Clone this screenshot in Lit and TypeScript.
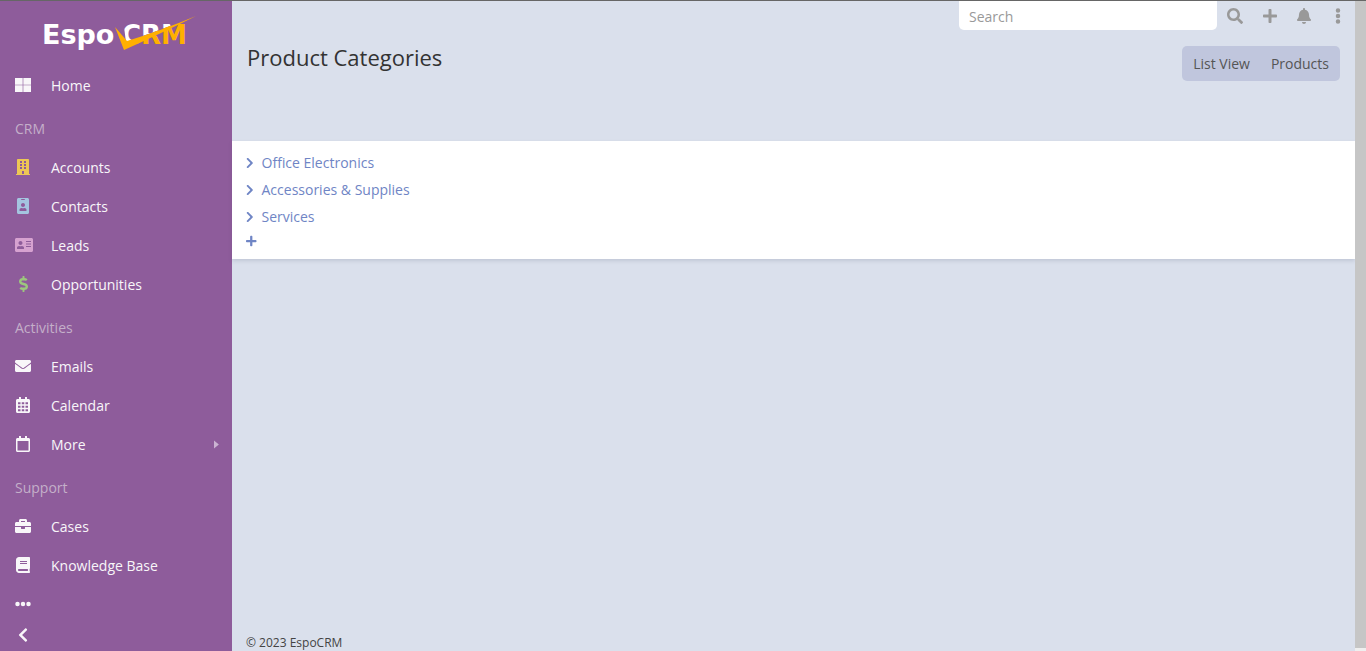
import { LitElement, html, svg, css, nothing } from "lit";
import { customElement, property } from "lit/decorators.js";

type Glyph = { width: number; path: string };

const box = (x: number, y: number, w: number, h: number) => `M${x} ${y}v${h}h${w}v${-h}z`;

const grid = (xs: number[], ys: number[], w: number, h: number) =>
  ys.map((y) => xs.map((x) => box(x, y, w, h)).join("")).join("");

const calendarFrame =
  "M400 64h-48V12c0-6.6-5.4-12-12-12h-40c-6.6 0-12 5.4-12 12v52H160V12c0-6.6-5.4-12-12-12h-40c-6.6 0-12 5.4-12 12v52H48C21.5 64 0 85.5 0 112v352c0 26.5 21.5 48 48 48h352c26.5 0 48-21.5 48-48V112c0-26.5-21.5-48-48-48z";

const dot = (cx: number, cy: number) => `M${cx - 72} ${cy}a72 72 0 1 0 144 0a72 72 0 1 0 -144 0z`;

const GLYPHS: Record<string, Glyph> = {
  home: { width: 512, path: grid([0, 266], [32, 266], 246, 214) },
  building: {
    width: 448,
    path:
      "M436 480h-20V24c0-13.3-10.7-24-24-24H56C42.7 0 32 10.7 32 24v456H12c-6.6 0-12 5.4-12 12v20h448v-20c0-6.6-5.4-12-12-12z" +
      grid([128, 256], [64, 160, 256], 64, 64) +
      box(192, 384, 64, 96),
  },
  badge: {
    width: 384,
    path: "M336 0H48C21.5 0 0 21.5 0 48v416c0 26.5 21.5 48 48 48h288c26.5 0 48-21.5 48-48V48c0-26.5-21.5-48-48-48zM144 32h96c8.8 0 16 7.2 16 16s-7.2 16-16 16h-96c-8.8 0-16-7.2-16-16s7.2-16 16-16zm48 128c35.3 0 64 28.7 64 64s-28.7 64-64 64-64-28.7-64-64 28.7-64 64-64zm112 236.8c0 10.6-10 19.2-22.4 19.2H102.4C90 416 80 407.4 80 396.8v-19.2c0-31.8 30.1-57.6 67.2-57.6h5c12.3 5.1 25.7 8 39.8 8s27.6-2.9 39.8-8h5c37.1 0 67.2 25.8 67.2 57.6v19.2z",
  },
  card: {
    width: 576,
    path:
      "M528 32H48C21.5 32 0 53.5 0 80v352c0 26.5 21.5 48 48 48h480c26.5 0 48-21.5 48-48V80c0-26.5-21.5-48-48-48zm-352 96c35.3 0 64 28.7 64 64s-28.7 64-64 64-64-28.7-64-64 28.7-64 64-64zm112 236.8c0 10.6-10 19.2-22.4 19.2H86.4C74 384 64 375.4 64 364.8v-19.2c0-31.8 30.1-57.6 67.2-57.6h5c12.3 5.1 25.7 8 39.8 8s27.6-2.9 39.8-8h5c37.1 0 67.2 25.8 67.2 57.6v19.2z" +
      grid([352], [128, 208, 288], 160, 32),
  },
  dollar: {
    width: 288,
    path: "M209.2 233.4l-108-31.6C88.7 198.2 80 186.5 80 173.5c0-16.3 13.2-29.5 29.5-29.5h66.3c12.2 0 24.2 3.7 34.2 10.5 6.1 4.1 14.3 3.1 19.5-2l34.8-34c7.1-6.9 6.1-18.4-1.8-24.5C238 74.8 207.4 64.1 176 64V16c0-8.8-7.2-16-16-16h-32c-8.8 0-16 7.2-16 16v48h-2.5C45.8 64-5.4 118.7.5 183.6c4.2 46.1 39.4 83.6 83.8 96.6l102.5 30c12.5 3.7 21.2 15.3 21.2 28.3 0 16.3-13.2 29.5-29.5 29.5h-66.3C100 368 88 364.3 78 357.5c-6.1-4.1-14.3-3.1-19.5 2l-34.8 34c-7.1 6.9-6.1 18.4 1.8 24.5 24.5 19.2 55.1 29.9 86.5 30v48c0 8.8 7.2 16 16 16h32c8.8 0 16-7.2 16-16v-48.2c46.6-.9 90.3-28.6 105.7-72.7 21.5-61.6-14.6-124.8-72.5-141.7z",
  },
  envelope: {
    width: 512,
    path: "M502.3 190.8c3.9-3.1 9.7-.2 9.7 4.7V400c0 26.5-21.5 48-48 48H48c-26.5 0-48-21.5-48-48V195.6c0-5 5.7-7.8 9.7-4.7 22.4 17.4 52.1 39.5 154.1 113.6 21.1 15.4 56.7 47.8 92.2 47.6 35.7.3 72-32.8 92.3-47.6 102-74.1 131.6-96.3 154-113.7zM256 320c23.2.4 56.6-29.2 73.4-41.4 132.7-96.3 142.8-104.7 173.4-128.7 5.8-4.5 9.2-11.5 9.2-18.9v-19c0-26.5-21.5-48-48-48H48c-26.5 0-48 21.5-48 48v19c0 7.4 3.4 14.3 9.2 18.9 30.6 23.9 40.7 32.4 173.4 128.7 16.8 12.2 50.2 41.8 73.4 41.4z",
  },
  calendar: { width: 448, path: calendarFrame + grid([64, 184, 304], [168, 280, 392], 80, 64) },
  calendarEmpty: { width: 448, path: calendarFrame + "M394 464H54c-3.3 0-6-2.7-6-6V160h352v298c0 3.3-2.7 6-6 6z" },
  briefcase: {
    width: 512,
    path: "M320 336c0 8.8-7.2 16-16 16h-96c-8.8 0-16-7.2-16-16v-48H0v144c0 25.6 22.4 48 48 48h416c25.6 0 48-22.4 48-48V288H320v48zm144-208h-80V80c0-25.6-22.4-48-48-48H176c-25.6 0-48 22.4-48 48v48H48c-25.6 0-48 22.4-48 48v80h512v-80c0-25.6-22.4-48-48-48zm-144 0H192V96h128v32z",
  },
  book: {
    width: 448,
    path:
      "M448 360V24c0-13.3-10.7-24-24-24H96C43 0 0 43 0 96v320c0 53 43 96 96 96h328c13.3 0 24-10.7 24-24v-16c0-7.5-3.5-14.3-8.9-18.7-4.2-15.4-4.2-59.3 0-74.7 5.4-4.3 8.9-11.1 8.9-18.6zM381.4 448H96c-17.7 0-32-14.3-32-32 0-17.6 14.4-32 32-32h285.4c-1.9 17.1-1.9 46.9 0 64z" +
      grid([128], [128, 192], 224, 32),
  },
  dots: { width: 512, path: dot(80, 256) + dot(256, 256) + dot(432, 256) },
  dotsVertical: { width: 192, path: dot(96, 80) + dot(96, 256) + dot(96, 432) },
  chevronLeft: {
    width: 320,
    path: "M34.5 239L228.9 44.7c9.4-9.4 24.6-9.4 33.9 0l22.7 22.7c9.4 9.4 9.4 24.5 0 33.9L131.5 256l154 154.7c9.4 9.4 9.4 24.6 0 33.9l-22.7 22.7c-9.4 9.4-24.6 9.4-33.9 0L34.5 273c-9.4-9.4-9.4-24.6 0-34z",
  },
  chevronRight: {
    width: 320,
    path: "M285.5 273L91.1 467.3c-9.4 9.4-24.6 9.4-33.9 0l-22.7-22.7c-9.4-9.4-9.4-24.5 0-33.9L188.5 256 34.5 101.3c-9.4-9.4-9.4-24.6 0-33.9l22.7-22.7c9.4-9.4 24.6-9.4 33.9 0L285.5 239c9.4 9.4 9.4 24.6 0 34z",
  },
  search: {
    width: 512,
    path: "M505 442.7L405.3 343c-4.5-4.5-10.6-7-17-7H372c27.6-35.3 44-79.7 44-128C416 93.1 322.9 0 208 0S0 93.1 0 208s93.1 208 208 208c48.3 0 92.7-16.4 128-44v16.3c0 6.4 2.5 12.5 7 17l99.7 99.7c9.4 9.4 24.6 9.4 33.9 0l28.3-28.3c9.4-9.4 9.4-24.6.1-34zM208 336c-70.7 0-128-57.2-128-128 0-70.7 57.2-128 128-128 70.7 0 128 57.2 128 128 0 70.7-57.2 128-128 128z",
  },
  plus: {
    width: 448,
    path: "M416 208H272V64c0-17.7-14.3-32-32-32h-32c-17.7 0-32 14.3-32 32v144H32c-17.7 0-32 14.3-32 32v32c0 17.7 14.3 32 32 32h144v144c0 17.7 14.3 32 32 32h32c17.7 0 32-14.3 32-32V304h144c17.7 0 32-14.3 32-32v-32c0-17.7-14.3-32-32-32z",
  },
  bell: {
    width: 448,
    path: "M224 512c35.3 0 64-28.7 64-64H160c0 35.3 28.7 64 64 64zm215.4-149.7c-19.3-20.8-55.5-52-55.5-154.3 0-77.7-54.5-139.9-127.9-155.2V32c0-17.7-14.3-32-32-32s-32 14.3-32 32v20.8C118.6 68.1 64.1 130.3 64.1 208c0 102.3-36.2 133.5-55.5 154.3-6 6.4-8.7 14.2-8.6 21.7.1 16.4 13 32 32.1 32h383.8c19.1 0 32-15.6 32.1-32 0-7.5-2.6-15.3-8.5-21.7z",
  },
  caret: { width: 192, path: "M0 96L192 256L0 416z" },
};

@customElement("crm-icon")
export class CrmIcon extends LitElement {
  @property() name = "";
  @property({ type: Number }) size = 16;

  static styles = css`
    :host { display: inline-flex; flex: none; }
    svg { display: block; fill: currentColor; fill-rule: evenodd; }
  `;

  render() {
    const glyph = GLYPHS[this.name];
    if (!glyph) return nothing;
    return html`<svg
      width=${(glyph.width / 512) * this.size}
      height=${this.size}
      viewBox="0 0 ${glyph.width} 512"
      aria-hidden="true"
    >${svg`<path d=${glyph.path}></path>`}</svg>`;
  }
}

@customElement("crm-logo")
export class CrmLogo extends LitElement {
  static styles = css`
    :host { display: block; }
    svg { display: block; }
    .word { font-family: "DejaVu Sans", Verdana, sans-serif; font-weight: 700; }
    .first { font-size: 27px; }
    .second { font-size: 26px; }
    .light { fill: #fff; }
    .gold { fill: #ffb000; }
  `;

  render() {
    return html`<svg width="156" height="40" viewBox="0 0 156 40" role="img" aria-label="EspoCRM">
      <defs>
        <clipPath id="above"><path d="M80 0H156V4L84 30Z"></path></clipPath>
        <clipPath id="below"><path d="M84 31L156 3V40H84Z"></path></clipPath>
      </defs>
      <text class="word first light" x="0" y="32">Espo</text>
      <text class="word second light" x="80" y="32" clip-path="url(#above)">CRM</text>
      <text class="word second gold" x="80" y="32" clip-path="url(#below)">CRM</text>
      <path class="gold" d="M73 15L85 29Q118 19 154 4Q120 21 82 38Z"></path>
    </svg>`;
  }
}

type NavEntry = { label: string; icon?: string; tone?: string; more?: boolean };

const NAV: NavEntry[] = [
  { label: "Home", icon: "home" },
  { label: "CRM" },
  { label: "Accounts", icon: "building", tone: "yellow" },
  { label: "Contacts", icon: "badge", tone: "blue" },
  { label: "Leads", icon: "card", tone: "pink" },
  { label: "Opportunities", icon: "dollar", tone: "green" },
  { label: "Activities" },
  { label: "Emails", icon: "envelope" },
  { label: "Calendar", icon: "calendar" },
  { label: "More", icon: "calendarEmpty", more: true },
  { label: "Support" },
  { label: "Cases", icon: "briefcase" },
  { label: "Knowledge Base", icon: "book" },
];

const CATEGORIES = ["Office Electronics", "Accessories & Supplies", "Services"];

@customElement("app-root")
export class AppRoot extends LitElement {
  static styles = css`
    :host {
      display: flex;
      box-sizing: border-box;
      height: 100vh;
      overflow: hidden;
      border-top: 1px solid #666;
      background: #dae0ec;
      color: #333;
      font: 14px/20px "Open Sans", sans-serif;
    }
    *, *::before { box-sizing: border-box; }
    a { color: inherit; text-decoration: none; }
    button {
      display: flex;
      align-items: center;
      padding: 0;
      border: 0;
      background: none;
      color: inherit;
      font: inherit;
      cursor: pointer;
    }
    ul { margin: 0; padding: 0; list-style: none; }

    .sidebar {
      display: flex;
      flex-direction: column;
      flex: none;
      width: 232px;
      background: #8e5c9b;
      color: #f8f6f9;
    }
    .brand { display: block; padding: 11px 0 14px 42px; }
    .item { display: flex; align-items: center; height: 39px; padding: 0 13px 0 15px; }
    .slot {
      display: flex;
      justify-content: safe center;
      width: 16px;
      margin-right: 20px;
      padding-bottom: 2px;
    }
    .yellow { color: #edc755; }
    .blue { color: #a4c5e0; }
    .pink { color: #d6a2d0; }
    .green { color: #9cc77d; }
    .caret { display: flex; margin-left: auto; padding-bottom: 1px; color: #cbb3d2; }
    .divider { height: 43px; padding: 14px 15px 0; color: #c4afc9; }
    .tool { width: 100%; height: 38px; padding: 0 15px; }
    .collapse { height: 24px; padding: 0 18px; }

    .main { display: flex; flex-direction: column; flex: 1; min-width: 0; }
    .topbar { display: flex; justify-content: flex-end; height: 29px; padding-right: 8px; color: #999; }
    .search {
      width: 258px;
      height: 29px;
      padding: 2px 10px 0;
      border: 0;
      border-radius: 0 0 5px 5px;
      outline: 0;
      background: #fff;
      color: #333;
      font: inherit;
    }
    .search::placeholder { color: #999; opacity: 1; }
    .action { justify-content: center; width: 34px; height: 30px; }
    .action.find { width: 36px; }
    .action.menu { width: 34px; margin-right: -8px; }

    .header {
      display: flex;
      justify-content: space-between;
      align-items: flex-start;
      height: 111px;
      padding: 16px 15px 0;
    }
    h1 { margin: 0; font-size: 22px; line-height: 22px; font-weight: 400; }
    .buttons { display: flex; border-radius: 5px; background: #c0c6dd; color: #555; }
    .buttons a { padding: 8px 11px 7px; }
    .buttons a + a { padding-left: 10px; }

    .panel {
      padding: 8px 14px 8px;
      background: #fff;
      box-shadow: 0 2px 4px rgba(60, 70, 100, 0.16);
      color: #6f85c5;
    }
    .row { display: flex; align-items: center; gap: 8px; height: 27px; }
    .row button { height: 23px; }
    .add { height: 21px; }

    .footer { margin-top: auto; padding: 0 14px; font-size: 12px; line-height: 16px; color: #444; }
    .track { flex: none; width: 11px; background: #c6c6c6; border-bottom: 3px solid #efefef; }
  `;

  private renderEntry(entry: NavEntry) {
    if (!entry.icon) return html`<li class="divider">${entry.label}</li>`;
    return html`<li>
      <a class="item" href="#${entry.label}">
        <span class="slot ${entry.tone ?? ""}"><crm-icon name=${entry.icon}></crm-icon></span>
        <span>${entry.label}</span>
        ${entry.more ? html`<span class="caret"><crm-icon name="caret" size="13"></crm-icon></span>` : nothing}
      </a>
    </li>`;
  }

  render() {
    return html`
      <nav class="sidebar" aria-label="Main">
        <a class="brand" href="#home"><crm-logo></crm-logo></a>
        <ul>${NAV.map((entry) => this.renderEntry(entry))}</ul>
        <button class="tool" aria-label="More tabs"><crm-icon name="dots"></crm-icon></button>
        <button class="collapse" aria-label="Collapse menu"><crm-icon name="chevronLeft"></crm-icon></button>
      </nav>
      <div class="main">
        <div class="topbar">
          <input class="search" type="text" placeholder="Search" aria-label="Search" />
          <button class="action find" aria-label="Run search"><crm-icon name="search"></crm-icon></button>
          <button class="action" aria-label="Create"><crm-icon name="plus"></crm-icon></button>
          <button class="action" aria-label="Notifications"><crm-icon name="bell"></crm-icon></button>
          <button class="action menu" aria-label="Menu"><crm-icon name="dotsVertical"></crm-icon></button>
        </div>
        <header class="header">
          <h1>Product Categories</h1>
          <div class="buttons"><a href="#list">List View</a><a href="#products">Products</a></div>
        </header>
        <section class="panel">
          <ul>
            ${CATEGORIES.map(
              (name) => html`<li class="row">
                <button aria-label="Expand ${name}"><crm-icon name="chevronRight" size="12"></crm-icon></button>
                <a href="#category">${name}</a>
              </li>`
            )}
          </ul>
          <button class="add" aria-label="Create category"><crm-icon name="plus" size="12"></crm-icon></button>
        </section>
        <footer class="footer">© 2023 <a href="#about">EspoCRM</a></footer>
      </div>
      <div class="track"></div>
    `;
  }
}
